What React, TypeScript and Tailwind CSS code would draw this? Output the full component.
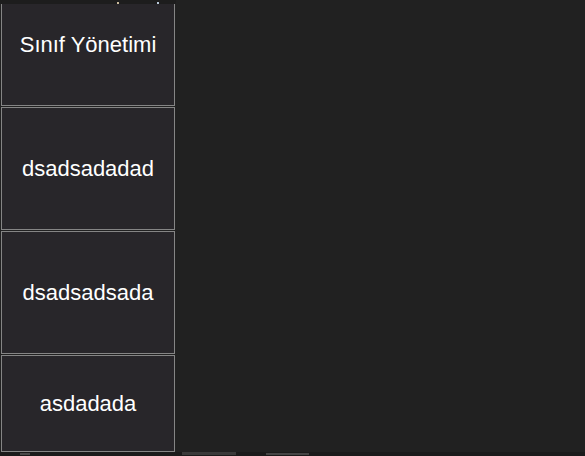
import * as React from "react";

const items = [
  { label: "Sınıf Yönetimi", h: "h-[123px]" },
  { label: "dsadsadadad", h: "h-[123px]" },
  { label: "dsadsadsada", h: "h-[123px]" },
  { label: "asdadada", h: "h-[97px]" },
];

export default function App() {
  return (
    <div
      className="w-[585px] h-[456px] overflow-hidden bg-[#212121] flex flex-col"
      style={{ fontFamily: '"Liberation Sans", Arial, sans-serif' }}
    >
      {/* clipped header strip above the scrolled list */}
      <div className="h-[4px] w-[176px] shrink-0 bg-[#1d1d1d] flex items-end overflow-hidden">
        <span className="ml-[117px] w-[2px] h-[2px] bg-[#c9b89a]" />
        <span className="ml-[38px] w-[2px] h-[2px] bg-[#b7c7d8]" />
      </div>

      {/* list, scrolled a little */}
      <div className="flex-1 min-h-0 overflow-hidden">
        <div className="-mt-[21px] ml-[1px] w-[174px] flex flex-col gap-[1px]">
          {items.map((it) => (
            <button
              key={it.label}
              className={`${it.h} w-full shrink-0 border border-[#858585] bg-[#28262a] text-white text-[22px] leading-none flex items-center justify-center`}
            >
              {it.label}
            </button>
          ))}
        </div>
      </div>

      {/* clipped footer strip */}
      <div className="h-[4px] shrink-0 bg-[#1b1b1b] flex items-start">
        <span className="ml-[20px] mt-[1px] w-[10px] h-[2px] bg-[#4a4a4a]" />
        <span className="ml-[152px] w-[54px] h-[3px] bg-[#3a3a3a]" />
        <span className="ml-[30px] mt-[1px] w-[43px] h-[2px] bg-[#454545]" />
      </div>
    </div>
  );
}
